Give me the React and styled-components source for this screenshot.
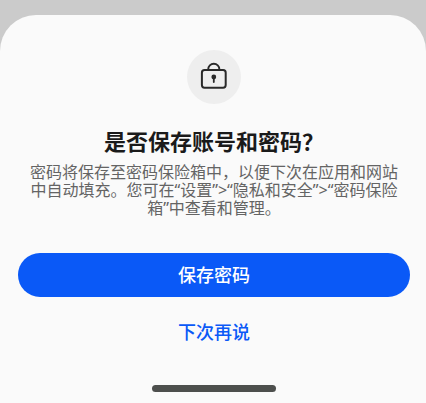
import React from "react";
import styled, { createGlobalStyle } from "styled-components";

const GlobalStyle = createGlobalStyle`
  *, *::before, *::after { box-sizing: border-box; }
  body {
    margin: 0;
    background: #cbcbcb;
    font-family: "Noto Sans", "Noto Sans CJK SC", sans-serif;
  }
`;

const Backdrop = styled.div`
  display: flex;
  flex-direction: column;
  min-height: 100vh;
  padding-top: 15px;
  background: #cbcbcb;
`;

const Sheet = styled.main`
  display: flex;
  flex: 1;
  flex-direction: column;
  align-items: center;
  padding: 35px 16px 11px 18px;
  border-radius: 36px 36px 0 0;
  background: #fafafa;
`;

const IconBadge = styled.div`
  display: flex;
  width: 54px;
  height: 54px;
  border-radius: 50%;
  background: #eeeeee;
`;

const Title = styled.h1`
  margin: 21px 0 0;
  color: #1a1a1a;
  font-size: 22px;
  font-weight: 700;
  line-height: 32px;
  text-align: center;
`;

const Message = styled.p`
  margin: 6px 0 0;
  padding: 0 10px;
  color: #646464;
  font-size: 16px;
  line-height: 18px;
  text-align: center;
`;

const Actions = styled.div`
  display: flex;
  flex-direction: column;
  gap: 13px;
  width: 100%;
  margin-top: 36px;
`;

const ActionButton = styled.button`
  height: 44px;
  padding: 0;
  border: 0;
  border-radius: 22px;
  background: ${({ $primary }) => ($primary ? "#0a59f7" : "transparent")};
  color: ${({ $primary }) => ($primary ? "#ffffff" : "#0a59f7")};
  font-family: inherit;
  font-size: 18px;
  font-weight: 500;
  line-height: 24px;
  cursor: pointer;
`;

const HomeIndicator = styled.div`
  width: 124px;
  height: 7px;
  margin-top: auto;
  border-radius: 4px;
  background: #4d4f4d;
`;

const TITLE = "是否保存账号和密码\uff1f";
const MESSAGE =
  "密码将保存至密码保险箱中\uff0c以便下次在应用和网站中自动填充。" +
  "您可在\u201c设置\u201d>\u201c隐私和安全\u201d>\u201c密码保险箱\u201d中查看和管理。";

function LockIcon() {
  return (
    <svg width="54" height="54" viewBox="0 0 54 54" fill="none" aria-hidden="true">
      <path d="M21.2 20v-.6a5.6 5.6 0 0 1 11.2 0v.6" stroke="#292929" strokeWidth="1.9" />
      <rect x="14.9" y="20.1" width="23.8" height="17.6" rx="2.6" stroke="#292929" strokeWidth="2" />
      <circle cx="26.8" cy="27" r="2.4" fill="#292929" />
      <path d="M26.8 27v5" stroke="#292929" strokeWidth="1.8" strokeLinecap="round" />
    </svg>
  );
}

export default function App() {
  return (
    <>
      <GlobalStyle />
      <Backdrop>
        <Sheet lang="zh-CN">
          <IconBadge>
            <LockIcon />
          </IconBadge>
          <Title>{TITLE}</Title>
          <Message>{MESSAGE}</Message>
          <Actions>
            <ActionButton type="button" $primary>保存密码</ActionButton>
            <ActionButton type="button">下次再说</ActionButton>
          </Actions>
          <HomeIndicator />
        </Sheet>
      </Backdrop>
    </>
  );
}
